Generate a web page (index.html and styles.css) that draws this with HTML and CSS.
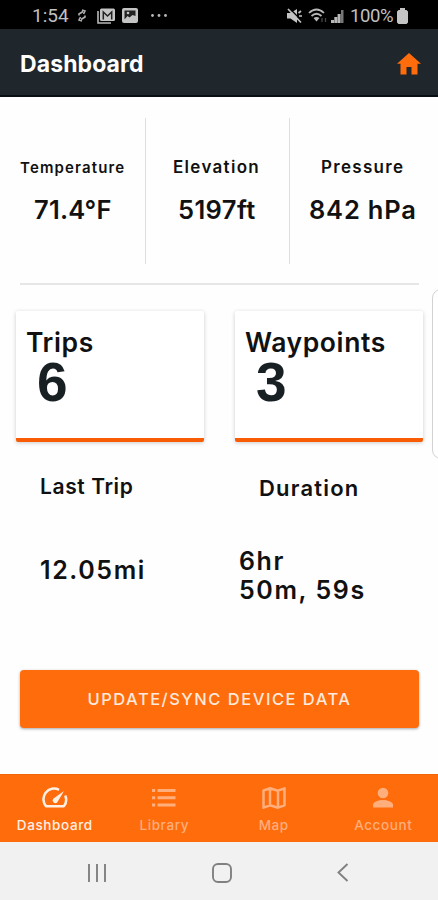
FILE: index.html
```
<!DOCTYPE html>
<html lang="en">
<head>
    <meta charset="UTF-8">
    <meta name="viewport" content="width=device-width, initial-scale=1.0">
    <title>Dashboard</title>
    <link rel="stylesheet" href="styles.css">
</head>
<body>
    <div class="status-bar">
        <div class="status-left">
            <span class="clock">1:54</span>
            <svg class="sync" width="8" height="13" viewBox="0 0 8 13"><path d="M1 6.500V5l4-2.500M4 1l3 1-1.500 3M7 6.500V8l-4 2.500M4 12l-3-1 1.500-3" fill="none" stroke="#b0b0b0" stroke-width="1.600"/></svg>
            <svg class="mail" width="18" height="16" viewBox="0 0 18 16"><path d="M1 3v12h13" fill="none" stroke="#b8b8b8" stroke-width="1.600"/><rect x="3" y="0.500" width="15" height="12.500" rx="1.500" fill="#c4c4c4"/><path d="M6.300 11.500V4l4.200 4 4.200-4v7.500" fill="none" stroke="#222" stroke-width="1.500"/></svg>
            <svg class="photo" width="16" height="15" viewBox="0 0 16 15"><rect width="16" height="15" rx="2" fill="#c4c4c4"/><path d="M2.500 11.500V2.500h11V8l-3-1-3 2.500-2-1.500z" fill="#222"/><circle cx="6" cy="5" r="1.300" fill="#c4c4c4"/></svg>
            <svg class="dots" width="16" height="3" viewBox="0 0 16 3"><g fill="#b8b8b8"><circle cx="1.500" cy="1.500" r="1.400"/><circle cx="8" cy="1.500" r="1.400"/><circle cx="14.500" cy="1.500" r="1.400"/></g></svg>
        </div>
        <div class="status-right">
            <svg width="15" height="16" viewBox="0 0 15 16"><path d="M0 5h3.500L10 1v14L3.500 10.500H0z" fill="#c4c4c4"/><path d="M2 0l14 14" stroke="#000" stroke-width="1.500"/><path d="M1 1l13 13.500M11.500 5l2.500-2M12 8h3" stroke="#c4c4c4" stroke-width="1.700"/></svg>
            <svg class="wifi" width="20" height="16" viewBox="0 0 20 16"><g fill="none" stroke="#b8b8b8" stroke-width="1.700"><path d="M1 5q7.500-7 15 0M3.500 8q5-4.500 10 0"/><path d="M14 10v4M17.500 10v4" stroke="#444" stroke-width="1.300"/></g><path d="M5.500 10q3-2.200 6 0l-3 3.500z" fill="#b8b8b8"/></svg>
            <svg class="signal" width="13" height="14" viewBox="0 0 13 14"><path d="M0 14v-3h3v3zM3.300 14V8h3v6zM6.600 14V5h3v9z" fill="#b8b8b8"/><path d="M10 14V1H12.500v13z" fill="#777"/></svg>
            <span class="percent">100%</span>
            <svg class="battery" width="11" height="16" viewBox="0 0 11 16"><path d="M3 0h5v2h1.500L11 3.500V14.500L9.500 16h-8L0 14.500v-11L1.500 2H3z" fill="#c4c4c4"/></svg>
        </div>
    </div>

    <div class="header">
        <h1>Dashboard</h1>
        <svg width="24" height="22" viewBox="0 0 24 22"><path d="M12 0L24 10.800H20.500V21.500H14.500V14H9.500V21.500H3.500V10.800H0z" fill="#ff6c0c"/></svg>
    </div>

    <div class="content">
        <div class="stats">
            <div class="stat temperature">
                <div class="stat-label">Temperature</div>
                <div class="stat-value">71.4°F</div>
            </div>
            <div class="stat elevation">
                <div class="stat-label">Elevation</div>
                <div class="stat-value">5197ft</div>
            </div>
            <div class="stat pressure">
                <div class="stat-label">Pressure</div>
                <div class="stat-value">842 hPa</div>
            </div>
        </div>

        <div class="cards">
            <div class="card">
                <h2>Trips</h2>
                <div class="count">6</div>
            </div>
            <div class="card waypoints">
                <h2>Waypoints</h2>
                <div class="count">3</div>
            </div>
        </div>

        <div class="last-trip">
            <div class="distance">
                <h3>Last Trip</h3>
                <p>12.05mi</p>
            </div>
            <div class="duration">
                <h3>Duration</h3>
                <p>6hr<br>50m, 59s</p>
            </div>
        </div>

        <button class="sync-btn">UPDATE/SYNC DEVICE DATA</button>
        <div class="edge-handle"></div>
    </div>

    <div class="tabs">
        <div class="tab active">
            <svg width="26" height="22" viewBox="0 0 26 22"><path d="M17 2.800A10.600 10.600 0 0 0 4.200 19.300H21.800A10.600 10.600 0 0 0 23.200 8.500" fill="none" stroke="currentColor" stroke-width="2.500" stroke-linejoin="round"/><path d="M22 4L15.300 15.200A2.700 2.700 0 0 1 11.200 11.700z" fill="currentColor"/></svg>
            <span>Dashboard</span>
        </div>
        <div class="tab library">
            <svg width="24" height="22" viewBox="0 0 24 22"><path d="M0 2h3.200v3H0zM5.500 2h18v3H5.500zM0 9.300h3.200v3H0zM5.500 9.300h18v3H5.500zM0 16.600h3.200v3H0zM5.500 16.600h18v3H5.500z" fill="currentColor"/></svg>
            <span>Library</span>
        </div>
        <div class="tab map">
            <svg width="24" height="22" viewBox="0 0 24 22"><path d="M1.500 3.500L8 1.300l8 2.400 6.500-2.400v17L16 20.700l-8-2.400-6.500 2.400zM8 1.300v17M16 3.700v17" fill="none" stroke="currentColor" stroke-width="2.500" stroke-linejoin="round"/></svg>
            <span>Map</span>
        </div>
        <div class="tab account">
            <svg width="22" height="22" viewBox="0 0 22 22"><circle cx="11" cy="6" r="5.300" fill="currentColor"/><path d="M1 20.500V18c0-3.500 6-5 10-5s10 1.500 10 5v2.500z" fill="currentColor"/></svg>
            <span>Account</span>
        </div>
    </div>

    <div class="system-nav">
        <svg width="18" height="18" viewBox="0 0 18 18"><path d="M1 0v18M9 0v18M17 0v18" stroke="#808080" stroke-width="1.900"/></svg>
        <svg width="20" height="20" viewBox="0 0 20 20"><rect x="1" y="1" width="18" height="18" rx="5" fill="none" stroke="#808080" stroke-width="1.900"/></svg>
        <svg class="back" width="12" height="19" viewBox="0 0 12 19"><path d="M10.500 1L1.500 9.500l9 8.500" fill="none" stroke="#808080" stroke-width="1.900"/></svg>
    </div>
</body>
</html>
```
FILE: styles.css
```
* {
    box-sizing: border-box;
}
body {
    margin: 0;
    height: 900px;
    display: flex;
    flex-direction: column;
    overflow: hidden;
    background-color: #fefefe;
    color: #111;
    font-family: Inter, "Liberation Sans", sans-serif;
}
h1, h2, h3, p {
    margin: 0;
    font-weight: 600;
}
.status-bar {
    height: 29px;
    padding: 2px 30px 0 33px;
    display: flex;
    align-items: center;
    justify-content: space-between;
    background-color: #000;
    color: #c0c0c0;
    font-family: Roboto, sans-serif;
    font-size: 19px;
}
.status-left, .status-right {
    display: flex;
    align-items: center;
}
.clock {
    width: 46px;
    margin-left: -1px;
}
.mail {
    margin-left: 11px;
}
.photo {
    margin-left: 7px;
}
.dots {
    margin-left: 13px;
}
.wifi {
    margin-left: 6px;
}
.signal {
    margin-left: 3px;
}
.percent {
    width: 43px;
    margin-left: 6px;
    font-size: 18.5px;
    letter-spacing: -0.4px;
}
.battery {
    margin-left: 4px;
}
.header {
    height: 68px;
    padding: 4px 17px 0 20px;
    display: flex;
    align-items: center;
    justify-content: space-between;
    background-color: #1f272c;
    border-bottom: 2px solid #090e12;
    color: #fff;
}
.header h1 {
    font-size: 23px;
    line-height: 28px;
    font-weight: 700;
    letter-spacing: 0.1px;
}
.content {
    position: relative;
    height: 677px;
    padding: 21px 15px 0;
}
.stats {
    height: 167px;
    margin: 0 4px 0 5px;
    padding-bottom: 19px;
    display: grid;
    grid-template-columns: 125px 144px 130px;
    border-bottom: 2px solid #e6e6e6;
}
.stat {
    padding-top: 37px;
    font-weight: 600;
    white-space: nowrap;
}
.stat + .stat {
    border-left: 1px solid #dedede;
}
.stat-label {
    height: 24px;
    line-height: 24px;
    font-size: 17px;
    letter-spacing: 1.3px;
}
.stat-value {
    margin-top: 14px;
    line-height: 33px;
    font-size: 25.5px;
    letter-spacing: 0.4px;
}
.temperature .stat-label {
    font-size: 15px;
    line-height: 26px;
    letter-spacing: 1.15px;
}
.temperature .stat-value {
    padding-left: 14px;
    letter-spacing: 0.2px;
}
.elevation .stat-label {
    padding-left: 27px;
}
.elevation .stat-value {
    padding-left: 32px;
}
.pressure .stat-label {
    padding-left: 31px;
}
.pressure .stat-value {
    padding-left: 19px;
    letter-spacing: 0.8px;
}
.cards {
    margin: 26px 0 0 1px;
    display: flex;
    gap: 31px;
}
.card {
    width: 188px;
    height: 131px;
    padding: 14px 0 0 10px;
    background-color: #fff;
    border-bottom: 4px solid #f85c04;
    border-radius: 2px;
    box-shadow: 0 1px 4px rgba(0, 0, 0, 0.2);
}
.card h2 {
    font-size: 26.5px;
    line-height: 35px;
    letter-spacing: 0.6px;
}
.count {
    padding-left: 11px;
    font-family: "Liberation Sans", sans-serif;
    font-size: 55px;
    line-height: 44px;
    font-weight: 700;
    color: #192024;
}
.last-trip {
    height: 228px;
    display: flex;
}
.distance {
    width: 209px;
    padding: 30px 0 0 25px;
}
.distance h3 {
    font-size: 21px;
    line-height: 29px;
    letter-spacing: 0.6px;
}
.distance p {
    margin-top: 54px;
    font-size: 25px;
    line-height: 30px;
    letter-spacing: 1.6px;
}
.duration {
    padding: 32px 0 0 15px;
}
.duration h3 {
    padding-left: 20px;
    font-size: 22px;
    line-height: 29px;
    letter-spacing: 1.2px;
}
.duration p {
    margin-top: 44px;
    font-size: 25px;
    line-height: 29px;
    letter-spacing: 1.6px;
}
.sync-btn {
    display: block;
    width: 399px;
    height: 58px;
    margin-left: 5px;
    padding: 0;
    border: none;
    border-radius: 4px;
    background-color: #ff6c0c;
    box-shadow: 0 1px 3px rgba(0, 0, 0, 0.35);
    color: #ffe9dc;
    font: 500 16.5px Inter, sans-serif;
    letter-spacing: 1.5px;
}
.edge-handle {
    position: absolute;
    top: 192px;
    right: -12px;
    width: 18px;
    height: 170px;
    border: 1px solid #d2d2d2;
    border-radius: 9px;
    background-color: #fff;
}
.tabs {
    height: 68px;
    display: grid;
    grid-template-columns: repeat(4, 1fr);
    background-color: #ff6c0c;
    border-top: 1px solid #f46408;
}
.tab {
    padding-top: 12px;
    display: flex;
    flex-direction: column;
    align-items: center;
    color: #ffae7c;
    font-size: 13.5px;
    font-weight: 500;
    letter-spacing: 0.6px;
}
.tab span {
    line-height: 18px;
    margin-top: 7px;
}
.tab.active {
    color: #fff0e6;
}
.system-nav {
    height: 58px;
    padding: 3px 89px 0 88px;
    display: flex;
    align-items: center;
    justify-content: space-between;
    background-color: #f1f1f1;
}
```
